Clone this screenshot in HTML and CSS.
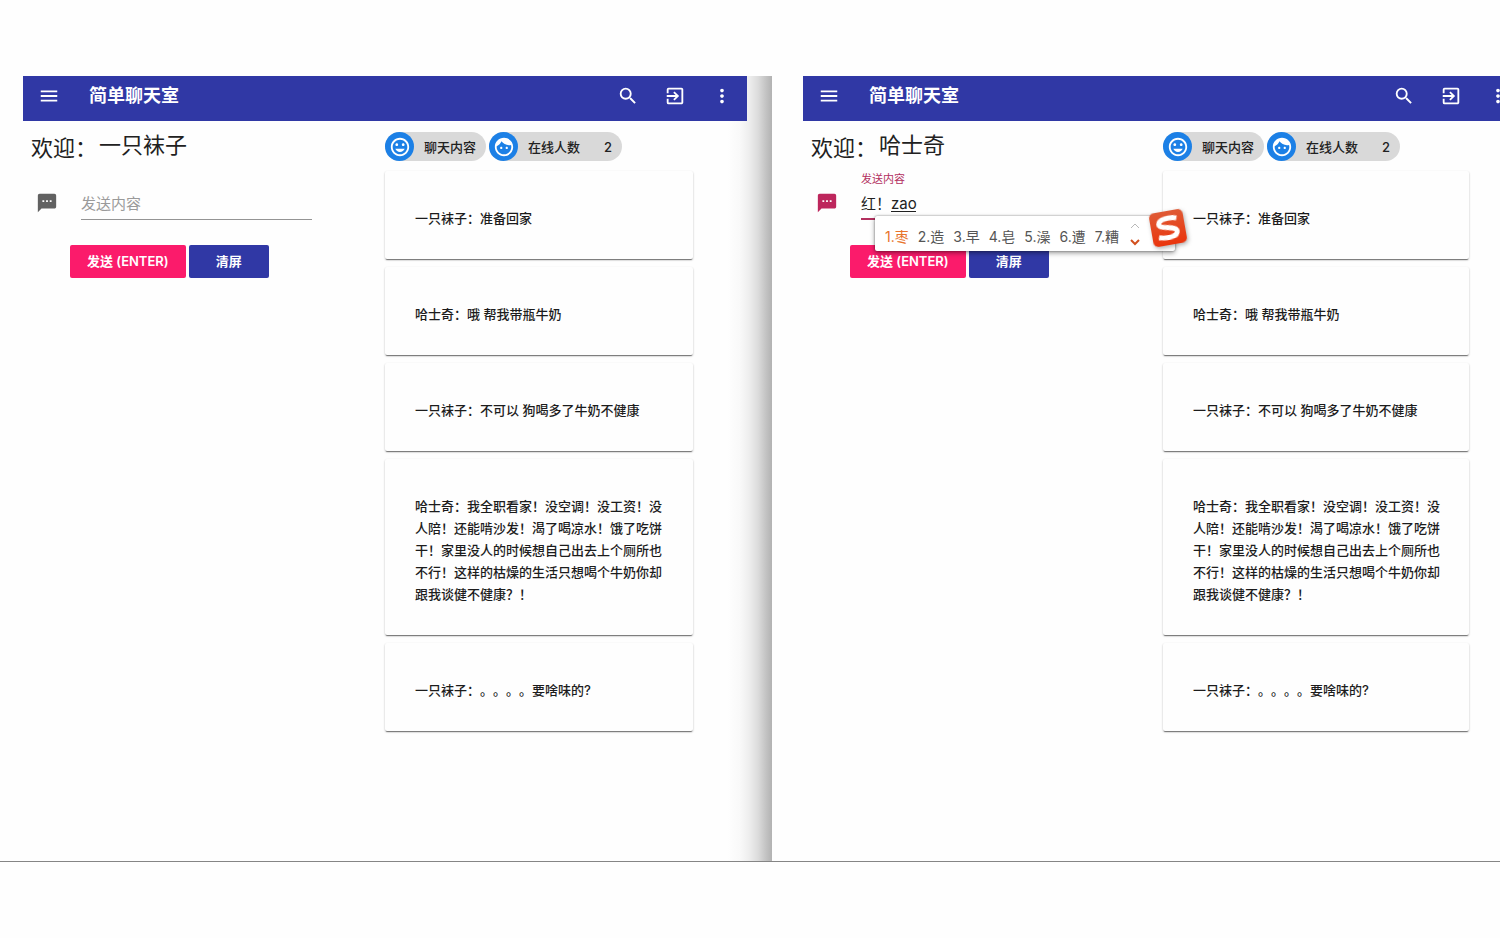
FILE: index.html
```html
<!DOCTYPE html>
<html lang="zh-CN">
<head>
<meta charset="utf-8">
<title>简单聊天室</title>
<meta name="viewport" content="width=device-width, initial-scale=1">
<link rel="stylesheet" href="styles.css">
</head>
<body>
<svg class="sprite" aria-hidden="true">
  <symbol id="i-menu" viewBox="0 0 24 24"><path d="M3 18h18v-2H3v2zm0-5h18v-2H3v2zm0-7v2h18V6H3z"/></symbol>
  <symbol id="i-search" viewBox="0 0 24 24"><path d="M15.5 14h-.79l-.28-.27A6.47 6.47 0 0 0 16 9.5 6.5 6.5 0 1 0 9.5 16c1.61 0 3.09-.59 4.23-1.57l.27.28v.79l5 4.99L20.49 19l-4.99-5zm-6 0C7.01 14 5 11.99 5 9.5S7.01 5 9.5 5 14 7.01 14 9.5 11.99 14 9.5 14z"/></symbol>
  <symbol id="i-exit" viewBox="0 0 24 24"><path d="M10.09 15.59L11.5 17l5-5-5-5-1.41 1.41L12.67 11H3v2h9.67l-2.58 2.59zM19 3H5a2 2 0 0 0-2 2v4h2V5h14v14H5v-4H3v4a2 2 0 0 0 2 2h14c1.1 0 2-.9 2-2V5c0-1.1-.9-2-2-2z"/></symbol>
  <symbol id="i-more" viewBox="0 0 24 24"><path d="M12 8c1.1 0 2-.9 2-2s-.9-2-2-2-2 .9-2 2 .9 2 2 2zm0 2c-1.1 0-2 .9-2 2s.9 2 2 2 2-.9 2-2-.9-2-2-2zm0 6c-1.1 0-2 .9-2 2s.9 2 2 2 2-.9 2-2-.9-2-2-2z"/></symbol>
  <symbol id="i-sms" viewBox="0 0 24 24"><path d="M20 2H4c-1.1 0-1.99.9-1.99 2L2 22l4-4h14c1.1 0 2-.9 2-2V4c0-1.1-.9-2-2-2zM9 11H7V9h2v2zm4 0h-2V9h2v2zm4 0h-2V9h2v2z"/></symbol>
  <symbol id="i-mood" viewBox="0 0 24 24"><path d="M11.99 2C6.47 2 2 6.48 2 12s4.47 10 9.99 10C17.52 22 22 17.52 22 12S17.52 2 11.99 2zM12 20c-4.42 0-8-3.58-8-8s3.58-8 8-8 8 3.58 8 8-3.58 8-8 8zm3.5-9c.83 0 1.5-.67 1.5-1.5S16.33 8 15.5 8 14 8.67 14 9.5s.67 1.5 1.5 1.5zm-7 0c.83 0 1.5-.67 1.5-1.5S9.33 8 8.5 8 7 8.67 7 9.5 7.67 11 8.5 11zm3.5 6.5c2.33 0 4.31-1.46 5.11-3.5H6.89c.8 2.04 2.78 3.5 5.11 3.5z"/></symbol>
  <symbol id="i-face" viewBox="0 0 24 24"><path d="M9 11.75c-.69 0-1.25.56-1.25 1.25s.56 1.25 1.25 1.25 1.25-.56 1.25-1.25-.56-1.25-1.25-1.25zm6 0c-.69 0-1.25.56-1.25 1.25s.56 1.25 1.25 1.25 1.25-.56 1.25-1.25-.56-1.25-1.25-1.25zM12 2C6.48 2 2 6.48 2 12s4.48 10 10 10 10-4.48 10-10S17.52 2 12 2zm0 18c-4.41 0-8-3.59-8-8 0-.29.02-.58.05-.86 2.36-1.05 4.23-2.98 5.21-5.37C11.07 8.33 14.05 10 17.42 10c.78 0 1.53-.09 2.25-.26.21.71.33 1.47.33 2.26 0 4.41-3.59 8-8 8z"/></symbol>
</svg>

<main class="stage">
  <section class="window window-back">
    <div class="app">
      <header class="bar">
        <button class="icon-btn" type="button" aria-label="菜单"><svg class="icon"><use href="#i-menu"/></svg></button>
        <h1 class="title">简单聊天室</h1>
        <button class="icon-btn" type="button" aria-label="搜索"><svg class="icon"><use href="#i-search"/></svg></button>
        <button class="icon-btn" type="button" aria-label="退出"><svg class="icon"><use href="#i-exit"/></svg></button>
        <button class="icon-btn" type="button" aria-label="更多"><svg class="icon"><use href="#i-more"/></svg></button>
      </header>
      <div class="content">
        <form class="compose">
          <div class="welcome"><span class="hello">欢迎：</span><span class="name">一只袜子</span></div>
          <div class="field">
            <span class="field-icon"><svg class="icon"><use href="#i-sms"/></svg></span>
            <div class="control">
              <input class="input" type="text" placeholder="发送内容" aria-label="发送内容">
            </div>
          </div>
          <div class="actions">
            <button class="btn btn-send" type="button">发送 (ENTER)</button>
            <button class="btn btn-clear" type="button">清屏</button>
          </div>
        </form>
        <div class="feed">
          <div class="chips">
            <div class="chip"><span class="avatar"><svg class="icon"><use href="#i-mood"/></svg></span><span>聊天内容</span></div>
            <div class="chip"><span class="avatar"><svg class="icon"><use href="#i-face"/></svg></span><span>在线人数</span><span class="count">2</span></div>
          </div>
          <div class="cards">
            <p class="card">一只袜子：准备回家</p>
            <p class="card">哈士奇：哦 帮我带瓶牛奶</p>
            <p class="card">一只袜子：不可以 狗喝多了牛奶不健康</p>
            <p class="card">哈士奇：我全职看家！没空调！没工资！没人陪！还能啃沙发！渴了喝凉水！饿了吃饼干！家里没人的时候想自己出去上个厕所也不行！这样的枯燥的生活只想喝个牛奶你却跟我谈健不健康？！</p>
            <p class="card">一只袜子：。。。。要啥味的?</p>
          </div>
        </div>
      </div>
    </div>
  </section>

  <section class="window window-front">
    <div class="app">
      <header class="bar">
        <button class="icon-btn" type="button" aria-label="菜单"><svg class="icon"><use href="#i-menu"/></svg></button>
        <h1 class="title">简单聊天室</h1>
        <button class="icon-btn" type="button" aria-label="搜索"><svg class="icon"><use href="#i-search"/></svg></button>
        <button class="icon-btn" type="button" aria-label="退出"><svg class="icon"><use href="#i-exit"/></svg></button>
        <button class="icon-btn" type="button" aria-label="更多"><svg class="icon"><use href="#i-more"/></svg></button>
      </header>
      <div class="content">
        <form class="compose">
          <div class="welcome"><span class="hello">欢迎：</span><span class="name">哈士奇</span></div>
          <div class="field field-active">
            <span class="field-icon"><svg class="icon"><use href="#i-sms"/></svg></span>
            <div class="control">
              <label class="label" for="message">发送内容</label>
              <input class="input" id="message" type="text" value="红！zao">
              <span class="composing"></span>
              <div class="ime">
                <ol class="candidates">
                  <li class="current">1.枣</li><li>2.造</li><li>3.早</li><li>4.皂</li><li>5.澡</li><li>6.遭</li><li>7.糟</li>
                </ol>
                <svg class="pager" viewBox="0 0 10 24" aria-hidden="true"><path class="pager-up" d="M1 6l4-4 4 4"/><path class="pager-down" d="M1 18l4 4 4-4"/></svg>
                <svg class="ime-logo" viewBox="0 0 34 34" aria-hidden="true">
                  <defs><linearGradient id="logo-fill" x1="0" y1="0" x2="0" y2="1"><stop offset="0" stop-color="#df5a35"/><stop offset="1" stop-color="#ea340c"/></linearGradient></defs>
                  <rect width="34" height="34" rx="5" fill="url(#logo-fill)"/>
                  <path d="M27 8.500C21 6.500 9 6.500 8.500 12c-.4 5.500 17 3.500 17 9.500 0 6-12.500 5.800-19 3.700" fill="none" stroke="#fff" stroke-width="5"/>
                </svg>
              </div>
            </div>
          </div>
          <div class="actions">
            <button class="btn btn-send" type="button">发送 (ENTER)</button>
            <button class="btn btn-clear" type="button">清屏</button>
          </div>
        </form>
        <div class="feed">
          <div class="chips">
            <div class="chip"><span class="avatar"><svg class="icon"><use href="#i-mood"/></svg></span><span>聊天内容</span></div>
            <div class="chip"><span class="avatar"><svg class="icon"><use href="#i-face"/></svg></span><span>在线人数</span><span class="count">2</span></div>
          </div>
          <div class="cards">
            <p class="card">一只袜子：准备回家</p>
            <p class="card">哈士奇：哦 帮我带瓶牛奶</p>
            <p class="card">一只袜子：不可以 狗喝多了牛奶不健康</p>
            <p class="card">哈士奇：我全职看家！没空调！没工资！没人陪！还能啃沙发！渴了喝凉水！饿了吃饼干！家里没人的时候想自己出去上个厕所也不行！这样的枯燥的生活只想喝个牛奶你却跟我谈健不健康？！</p>
            <p class="card">一只袜子：。。。。要啥味的?</p>
          </div>
        </div>
      </div>
    </div>
  </section>
</main>
</body>
</html>
```

FILE: styles.css
```css
* { box-sizing: border-box; }

body {
  margin: 0;
  padding: 76px 0;
  background: #fefefe;
  color: #212121;
  font-family: Inter, "Noto Sans CJK SC", sans-serif;
  font-size: 13px;
  text-spacing-trim: space-all;
  overflow-x: hidden;
}

button, input { font: inherit; }

.sprite { position: absolute; width: 0; height: 0; }

.icon {
  display: block;
  width: 22px;
  height: 22px;
  fill: currentColor;
}

.stage {
  display: grid;
  grid-template-columns: 772fr 728fr;
  min-height: calc(100vh - 152px);
  border-bottom: 1px solid #858585;
  overflow: hidden;
}

.window { min-width: 0; }

.window-back {
  padding: 0 25px 0 23px;
  background: linear-gradient(to left, #b2b2b2 0, #c6c6c6 7px, #dcdcdc 14px, #eeeeee 23px, #f9f9f9 32px, #fefefe 44px);
}

/* The front window runs past the right edge of the stage. */
.window-front {
  padding-left: 31px;
  margin-right: -23px;
}

/* App bar */
.bar {
  display: flex;
  align-items: center;
  height: 45px;
  padding: 0 2px 5px;
  background: #3038a5;
  color: #fff;
}

.icon-btn {
  display: grid;
  place-items: center;
  width: 47px;
  height: 40px;
  padding: 0;
  border: 0;
  background: none;
  color: inherit;
}

.title {
  flex: 1;
  margin: 0 0 0 17px;
  font-size: 18px;
  font-weight: 700;
  line-height: 40px;
}

.content {
  display: grid;
  grid-template-columns: 1fr 1fr;
}

/* Compose column */
.welcome {
  display: flex;
  gap: 2px;
  height: 50px;
  padding-left: 8px;
  font-size: 22px;
  line-height: 48px;
}

.hello {
  padding-top: 5px;
  line-height: 44px;
}

.field {
  display: flex;
  align-items: flex-end;
  gap: 23px;
  height: 49px;
  padding: 0 73px 0 13px;
}

.field-icon {
  display: grid;
  place-items: center;
  height: 34px;
  color: #616161;
}

.control {
  position: relative;
  flex: 1;
}

.label {
  display: block;
  color: #b3305f;
  font-size: 11px;
  line-height: 16px;
}

.input {
  display: block;
  width: 100%;
  height: 33px;
  padding: 0;
  border: 0;
  border-bottom: 1px solid #949494;
  border-radius: 0;
  outline: 0;
  background: none;
  color: #212121;
  font-size: 15px;
}

.input::placeholder { color: #9a9a9a; opacity: 1; }

.field-active .field-icon { color: #bd265c; }
.field-active .input { border-bottom: 2px solid #b3305f; }

.composing {
  position: absolute;
  left: 30px;
  top: 40px;
  width: 25px;
  height: 1px;
  background: #212121;
}

.actions {
  display: flex;
  gap: 3px;
  margin-top: 25px;
  padding-left: 47px;
}

.btn {
  height: 33px;
  padding-top: 0;
  padding-bottom: 2px;
  border: 0;
  border-radius: 2px;
  color: #fff;
  font-weight: 600;
}

.btn-send { padding-left: 17px; padding-right: 17px; background: #fb1b6b; }
.btn-clear { padding-left: 27px; padding-right: 27px; background: #3038a5; }

/* Input method popup */
.ime {
  position: absolute;
  left: 14px;
  top: 45px;
  z-index: 2;
  display: flex;
  align-items: center;
  gap: 11px;
  width: 300px;
  height: 35px;
  padding-left: 10px;
  border-radius: 2px;
  background: #fff;
  box-shadow: 0 0 2px rgba(0, 0, 0, .45), 0 2px 5px rgba(0, 0, 0, .4);
}

.candidates {
  display: flex;
  gap: 9px;
  margin: 0;
  padding: 6px 0 0;
  list-style: none;
  color: #555;
  font-size: 14px;
  line-height: 20px;
}

.current { color: #e8742c; }

.pager {
  width: 10px;
  height: 24px;
  fill: none;
}

.pager-up { stroke: #b8b8b8; }
.pager-down { stroke: #d2501e; stroke-width: 2; }

.ime-logo {
  position: absolute;
  left: 276px;
  top: -5px;
  width: 34px;
  height: 34px;
  transform: rotate(-10deg);
  filter: drop-shadow(1px 2px 2px rgba(0, 0, 0, .3));
}

/* Message column */
.feed { padding: 11px 54px 0 0; }

.chips { display: flex; gap: 3px; }

.chip {
  display: flex;
  align-items: center;
  gap: 10px;
  height: 29px;
  padding-right: 10px;
  border-radius: 15px;
  background: #d9d9d9;
  font-weight: 500;
  line-height: 18px;
}

.avatar {
  display: grid;
  place-items: center;
  width: 29px;
  height: 29px;
  border-radius: 50%;
  background: #1c80e6;
  color: #fff;
}

.count { margin-left: 14px; }

.cards {
  display: grid;
  gap: 8px;
  margin-top: 10px;
}

.card {
  margin: 0;
  padding: 36px 28px 30px 30px;
  border-radius: 2px;
  background: #fefefe;
  box-shadow: 0 2px 1px -1px rgba(0, 0, 0, .4), 0 1px 2px rgba(0, 0, 0, .3);
  color: #1c1c1c;
  font-weight: 500;
  line-height: 22px;
}
```
